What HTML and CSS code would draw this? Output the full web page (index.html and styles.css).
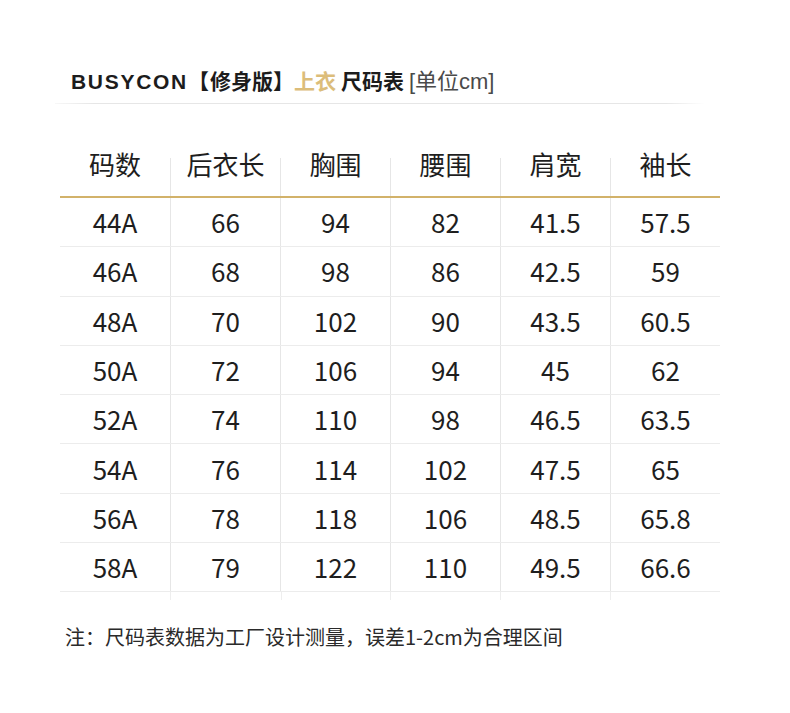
FILE: index.html
```html
<!DOCTYPE html>
<html lang="zh-CN">
<head>
<meta charset="utf-8">
<title>BUSYCON 尺码表</title>
<link rel="stylesheet" href="styles.css">
</head>
<body>
<div class="page">
  <div class="title"><span class="brand">BUSYCON</span><span class="cjk"><span class="lb">【</span>修身版<span class="rb">】</span><span class="gold">上衣</span><span class="chart">尺码表</span></span><span class="unit">[单位cm]</span></div>
  <div class="rule"></div>
  <div class="table">
    <div class="row head">
      <div class="cell"><span>码数</span></div>
      <div class="cell"><span>后衣长</span></div>
      <div class="cell"><span>胸围</span></div>
      <div class="cell"><span>腰围</span></div>
      <div class="cell"><span>肩宽</span></div>
      <div class="cell"><span>袖长</span></div>
    </div>
    <div class="row"><div class="cell">44A</div><div class="cell">66</div><div class="cell">94</div><div class="cell">82</div><div class="cell">41.5</div><div class="cell">57.5</div></div>
    <div class="row"><div class="cell">46A</div><div class="cell">68</div><div class="cell">98</div><div class="cell">86</div><div class="cell">42.5</div><div class="cell">59</div></div>
    <div class="row"><div class="cell">48A</div><div class="cell">70</div><div class="cell">102</div><div class="cell">90</div><div class="cell">43.5</div><div class="cell">60.5</div></div>
    <div class="row"><div class="cell">50A</div><div class="cell">72</div><div class="cell">106</div><div class="cell">94</div><div class="cell">45</div><div class="cell">62</div></div>
    <div class="row"><div class="cell">52A</div><div class="cell">74</div><div class="cell">110</div><div class="cell">98</div><div class="cell">46.5</div><div class="cell">63.5</div></div>
    <div class="row"><div class="cell">54A</div><div class="cell">76</div><div class="cell">114</div><div class="cell">102</div><div class="cell">47.5</div><div class="cell">65</div></div>
    <div class="row"><div class="cell">56A</div><div class="cell">78</div><div class="cell">118</div><div class="cell">106</div><div class="cell">48.5</div><div class="cell">65.8</div></div>
    <div class="row"><div class="cell">58A</div><div class="cell">79</div><div class="cell">122</div><div class="cell">110</div><div class="cell">49.5</div><div class="cell">66.6</div></div>
  </div>
  <p class="note">注：尺码表数据为工厂设计测量，误差1-2cm为合理区间</p>
</div>
</body>
</html>
```

FILE: styles.css
```css
html, body {
  margin: 0;
  padding: 0;
  background: #ffffff;
}
body {
  font-family: "Noto Sans CJK SC", "Noto Sans", sans-serif;
  color: #1e1e1e;
}
.page {
  width: 790px;
  height: 713px;
  overflow: hidden;
}
.title {
  box-sizing: content-box;
  height: 37px;
  padding: 66px 0 0 71px;
  font-family: "Liberation Sans", "Noto Sans CJK SC", sans-serif;
  font-size: 21px;
  line-height: 28px;
  font-weight: 700;
  color: #1c1c1c;
  white-space: nowrap;
}
.brand {
  letter-spacing: 1.7px;
}
.cjk {
  font-family: "Noto Sans CJK SC", sans-serif;
  font-size: 21px;
}
.lb {
  margin-right: 1px;
}
.gold {
  color: #dcbd7a;
  margin-right: 5px;
}
.unit {
  margin-left: 5px;
  font-family: "Liberation Sans", "Noto Sans CJK SC", sans-serif;
  font-size: 22px;
  font-weight: 400;
  color: #4a4a4a;
}
.rule {
  height: 1px;
  margin: 0 85px 0 55px;
  background: linear-gradient(to right, rgba(230,230,230,0.3), #e6e6e6 6%, #e6e6e6 94%, rgba(230,230,230,0));
}
.table {
  margin: 54px 0 0 60px;
  width: 660px;
}
.table::after {
  content: "";
  display: block;
  height: 8px;
  background: linear-gradient(to right, transparent 110px, #eeeeee 110px, #eeeeee 111px, transparent 111px, transparent 221px, #eeeeee 221px, #eeeeee 222px, transparent 222px, transparent 330px, #eeeeee 330px, #eeeeee 331px, transparent 331px, transparent 440px, #eeeeee 440px, #eeeeee 441px, transparent 441px, transparent 550px, #eeeeee 550px, #eeeeee 551px, transparent 551px);
}
.row {
  display: grid;
  grid-template-columns: repeat(6, 110px);
  box-sizing: border-box;
  height: 49.3px;
  border-bottom: 1px solid #ececec;
}
.row.head {
  height: 40px;
  border-bottom: 2px solid #d2b26a;
}
.cell {
  display: flex;
  align-items: center;
  justify-content: center;
  font-size: 26px;
  line-height: 26px;
  color: #1e1e1e;
}
.cell + .cell {
  border-left: 1px solid #e6e6e6;
}
.head .cell {
  align-items: flex-start;
}
.head .cell span {
  margin-top: -7px;
}
.note {
  margin: 22px 0 0 65px;
  font-size: 20px;
  line-height: 30px;
  color: #2a2a2a;
}
```
